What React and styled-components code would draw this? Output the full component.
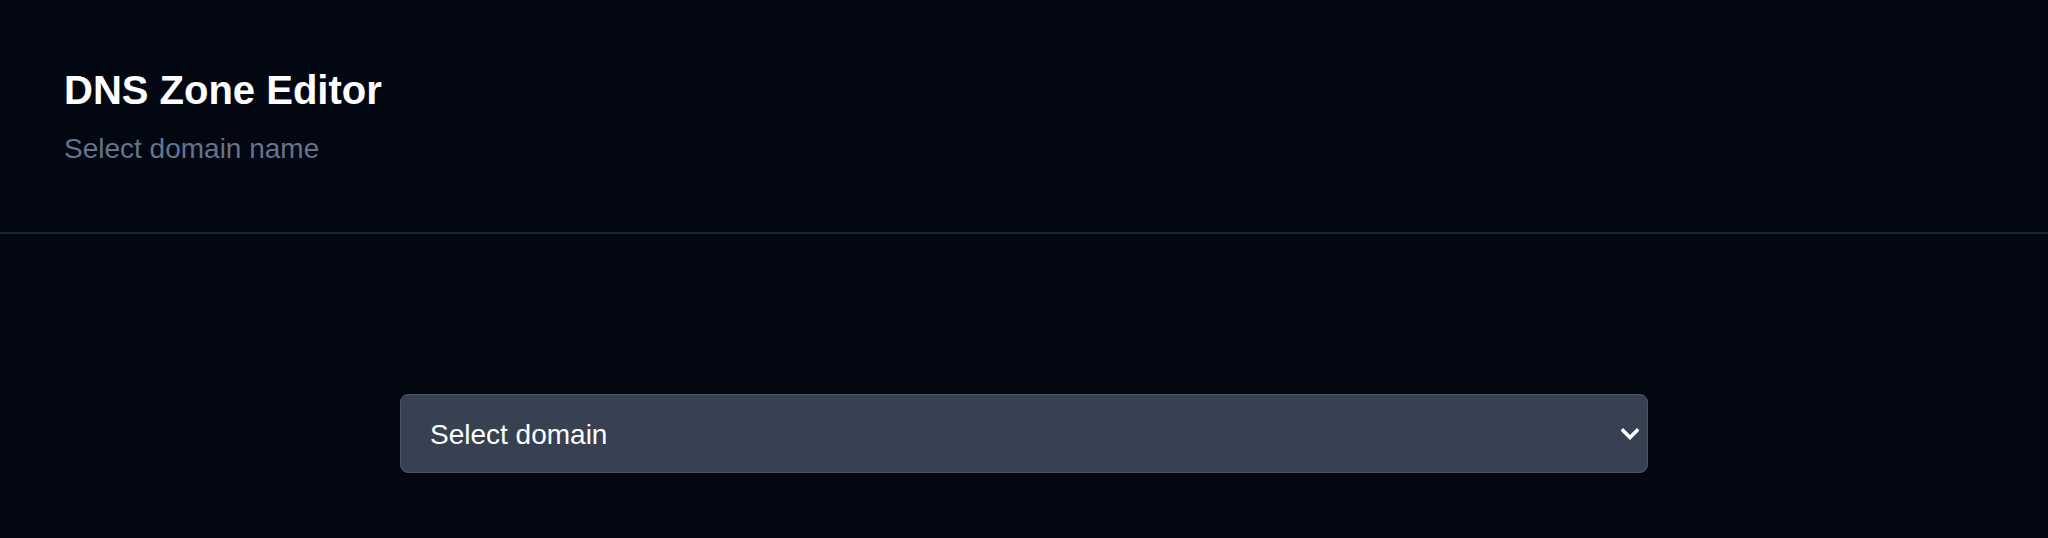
import React from "react";
import styled, { createGlobalStyle } from "styled-components";

const GlobalStyle = createGlobalStyle`
  html, body {
    margin: 0;
    padding: 0;
    background: #030712;
  }
  body {
    font-family: "Liberation Sans", Arial, sans-serif;
    color: #ffffff;
  }
  * { box-sizing: border-box; }
`;

const Page = styled.div`
  min-height: 538px;
  background: #030712;
  display: flex;
  flex-direction: column;
`;

const Header = styled.header`
  padding: 66px 64px 63px 64px;
  border-bottom: 2px solid #1f2633;
  display: flex;
  flex-direction: column;
  gap: 15px;
`;

const Title = styled.h1`
  margin: 0;
  font-size: 40px;
  line-height: 48px;
  font-weight: 700;
  color: #ffffff;
`;

const Subtitle = styled.p`
  margin: 0;
  font-size: 28px;
  line-height: 40px;
  color: #64748b;
`;

const Main = styled.main`
  padding: 160px 400px 0;
  display: flex;
  justify-content: center;
`;

const SelectWrap = styled.div`
  position: relative;
  width: 100%;
  max-width: 1248px;
`;

const Select = styled.select`
  appearance: none;
  -webkit-appearance: none;
  width: 100%;
  height: 79px;
  padding: 2px 60px 0 29px;
  font-family: "Liberation Sans", Arial, sans-serif;
  font-size: 28px;
  color: #ffffff;
  background: #374151;
  border: 1.5px solid #4b5563;
  border-radius: 8px;
  outline: none;
`;

const Chevron = styled.svg`
  position: absolute;
  right: 9px;
  top: 50%;
  transform: translateY(-50%);
  pointer-events: none;
`;

export default function App() {
  return (
    <>
      <GlobalStyle />
      <Page>
        <Header>
          <Title>DNS Zone Editor</Title>
          <Subtitle>Select domain name</Subtitle>
        </Header>
        <Main>
          <SelectWrap>
            <Select defaultValue="">
              <option value="">Select domain</option>
            </Select>
            <Chevron width="18" height="13" viewBox="0 0 18 13" aria-hidden="true">
              <polyline
                points="2,3 9,10 16,3"
                fill="none"
                stroke="#ffffff"
                strokeWidth="3.6"
                strokeLinecap="square"
                strokeLinejoin="miter"
              />
            </Chevron>
          </SelectWrap>
        </Main>
      </Page>
    </>
  );
}
